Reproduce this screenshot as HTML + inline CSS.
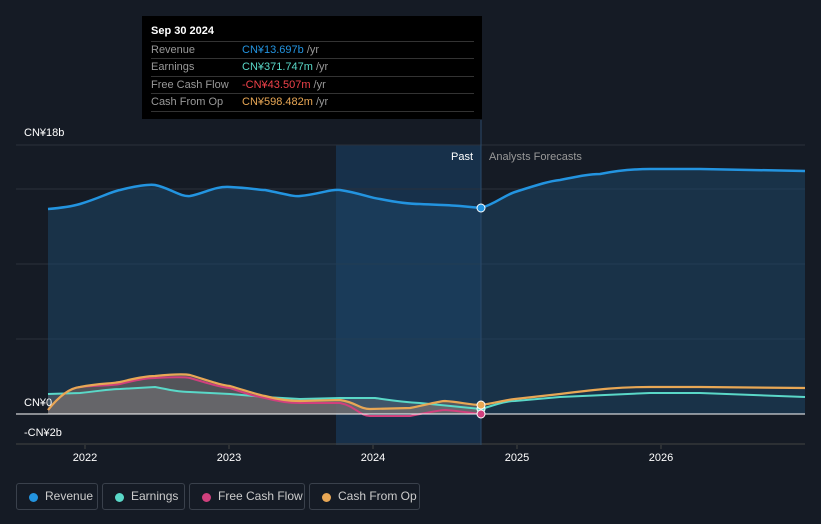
<!DOCTYPE html>
<html><head><meta charset="utf-8"><style>
html,body{margin:0;width:821px;height:524px;overflow:hidden}
body{background:#151b25;font-family:"Liberation Sans",sans-serif;position:relative}
.tt{position:absolute;left:142px;top:16px;width:340px;height:103px;background:#000;color:#fff;font-size:11px}
.tt .h{position:absolute;left:9px;top:9px;font-weight:bold}
.row{position:absolute;left:9px;width:323px;height:17px;border-top:1px solid #333;color:#999;line-height:17px}
.row span{position:absolute;left:91px}
.leg{position:absolute;top:483px;height:27px;border:1px solid #3a414c;border-radius:3px;color:#ccc;font-size:12px;line-height:25px;box-sizing:border-box;padding-left:28px;white-space:nowrap}
.leg i{position:absolute;left:12px;top:9px;width:9px;height:9px;border-radius:50%}
</style></head><body>
<svg width="821" height="524" style="position:absolute;left:0;top:0">
<rect x="48" y="145" width="288" height="300" fill="#151b25"/>
<rect x="336" y="145" width="145" height="300" fill="#17304a"/>
<g stroke="#2a313c" stroke-width="1"><line x1="16" y1="145" x2="805" y2="145"/><line x1="16" y1="189" x2="805" y2="189"/><line x1="16" y1="264" x2="805" y2="264"/><line x1="16" y1="339" x2="805" y2="339"/><line x1="16" y1="444" x2="805" y2="444" stroke="#444"/></g>
<path d="M48 209 C60 208 70 207 80 204 C100 198 110 192 120 190 C135 186 150 184 155 185 C170 188 180 197 190 196 C205 193 215 186 230 187 C250 188 260 190 265 190 C285 194 295 197 300 196 C320 194 330 189 340 190 C360 193 370 198 380 199 C400 203 410 204 420 204 C440 205 450 205 460 206 L481 208 C495 204 505 195 515 192 C540 184 550 181 560 180 C580 176 590 174 600 174 C620 170 635 169 650 169 L700 169 L805 171 L805 414 L48 414Z" fill="#1d4566" fill-opacity="0.55"/>
<path d="M48 209 C60 208 70 207 80 204 C100 198 110 192 120 190 C135 186 150 184 155 185 C170 188 180 197 190 196 C205 193 215 186 230 187 C250 188 260 190 265 190 C285 194 295 197 300 196 C320 194 330 189 340 190 C360 193 370 198 380 199 C400 203 410 204 420 204 C440 205 450 205 460 206 L481 208 C495 204 505 195 515 192 C540 184 550 181 560 180 C580 176 590 174 600 174 C620 170 635 169 650 169 L700 169 L805 171" fill="none" stroke="#2394e0" stroke-width="2.5"/>
<path d="M48 410 C60 395 70 388 80 387 C100 383 110 384 120 382 C140 377 150 376 155 376 C175 374 185 374 190 375 C210 381 220 385 230 386 C250 392 255 394 265 396 C280 400 290 401 300 401 L340 400 C355 402 360 409 370 409 L410 408 C430 404 440 401 445 401 C460 402 470 405 481 405 L481 414 L48 414Z" fill="#7a6a66" fill-opacity="0.6"/>
<path d="M48 394 L80 393 C100 391 110 389 120 389 L155 387 C170 390 180 392 190 392 L230 394 L265 397 L300 399 L340 398 L375 398 C390 400 400 402 420 403 L481 409 L481 414 L48 414Z" fill="#888" fill-opacity="0.35"/>
<path d="M48 394 L80 393 C100 391 110 389 120 389 L155 387 C170 390 180 392 190 392 L230 394 L265 397 L300 399 L340 398 L375 398 C390 400 400 402 420 403 L481 409 C495 405 505 401 515 401 L560 397 L650 393 L700 393 L805 397" fill="none" stroke="#5ad8c8" stroke-width="2"/>
<path d="M48 410 C60 395 70 388 80 387 C100 385 110 386 120 384 C140 379 150 378 155 378 C175 377 185 377 190 378 C210 384 220 387 230 388 C250 395 255 396 265 398 C280 402 290 403 300 403 L340 403 C355 406 360 416 370 416 L410 416 C430 412 440 410 445 410 C460 411 470 413 481 414" fill="none" stroke="#d0407d" stroke-width="2"/>
<path d="M48 410 C60 395 70 388 80 387 C100 383 110 384 120 382 C140 377 150 376 155 376 C175 374 185 374 190 375 C210 381 220 385 230 386 C250 392 255 394 265 396 C280 400 290 401 300 401 L340 400 C355 402 360 409 370 409 L410 408 C430 404 440 401 445 401 C460 402 470 405 481 405 C495 403 505 400 515 399 L560 394 C600 389 620 387 650 387 L700 387 L805 388" fill="none" stroke="#e8a755" stroke-width="2.2"/>
<line x1="16" y1="414" x2="805" y2="414" stroke="#fff" stroke-width="1"/>
<line x1="481" y1="120" x2="481" y2="445" stroke="#2a4a6a" stroke-width="1"/>
<circle cx="481" cy="208" r="4" fill="#2394e0" stroke="#fff" stroke-width="1"/>
<circle cx="481" cy="409" r="4" fill="#5ad8c8" stroke="#fff" stroke-width="1"/>
<circle cx="481" cy="405" r="4" fill="#e8a755" stroke="#fff" stroke-width="1"/>
<circle cx="481" cy="414" r="4" fill="#d0407d" stroke="#fff" stroke-width="1"/>
<g fill="#fff" font-size="11" font-family="Liberation Sans"><text x="24" y="136">CN¥18b</text><text x="24" y="406">CN¥0</text><text x="24" y="436">-CN¥2b</text>
<text x="473" y="160" text-anchor="end">Past</text><text x="489" y="160" fill="#999">Analysts Forecasts</text>
<g text-anchor="middle"><text x="85" y="461">2022</text><text x="229" y="461">2023</text><text x="373" y="461">2024</text><text x="517" y="461">2025</text><text x="661" y="461">2026</text></g></g>
<g stroke="#444"><line x1="85" y1="445" x2="85" y2="449"/><line x1="229" y1="445" x2="229" y2="449"/><line x1="373" y1="445" x2="373" y2="449"/><line x1="517" y1="445" x2="517" y2="449"/><line x1="661" y1="445" x2="661" y2="449"/></g>
</svg>
<div class="tt"><div class="h">Sep 30 2024</div>
<div class="row" style="top:25px">Revenue<span style="color:#2394e0">CN¥13.697b <b style="color:#999;font-weight:normal">/yr</b></span></div>
<div class="row" style="top:42px">Earnings<span style="color:#5ad8c8">CN¥371.747m <b style="color:#999;font-weight:normal">/yr</b></span></div>
<div class="row" style="top:60px">Free Cash Flow<span style="color:#f0424a">-CN¥43.507m <b style="color:#999;font-weight:normal">/yr</b></span></div>
<div class="row" style="top:77px;border-bottom:1px solid #333">Cash From Op<span style="color:#e8a755">CN¥598.482m <b style="color:#999;font-weight:normal">/yr</b></span></div>
</div>
<div class="leg" style="left:16px;width:82px"><i style="background:#2394e0"></i>Revenue</div>
<div class="leg" style="left:102px;width:83px"><i style="background:#5ad8c8"></i>Earnings</div>
<div class="leg" style="left:189px;width:116px"><i style="background:#d0407d"></i>Free Cash Flow</div>
<div class="leg" style="left:309px;width:111px"><i style="background:#e8a755"></i>Cash From Op</div>
</body></html>
